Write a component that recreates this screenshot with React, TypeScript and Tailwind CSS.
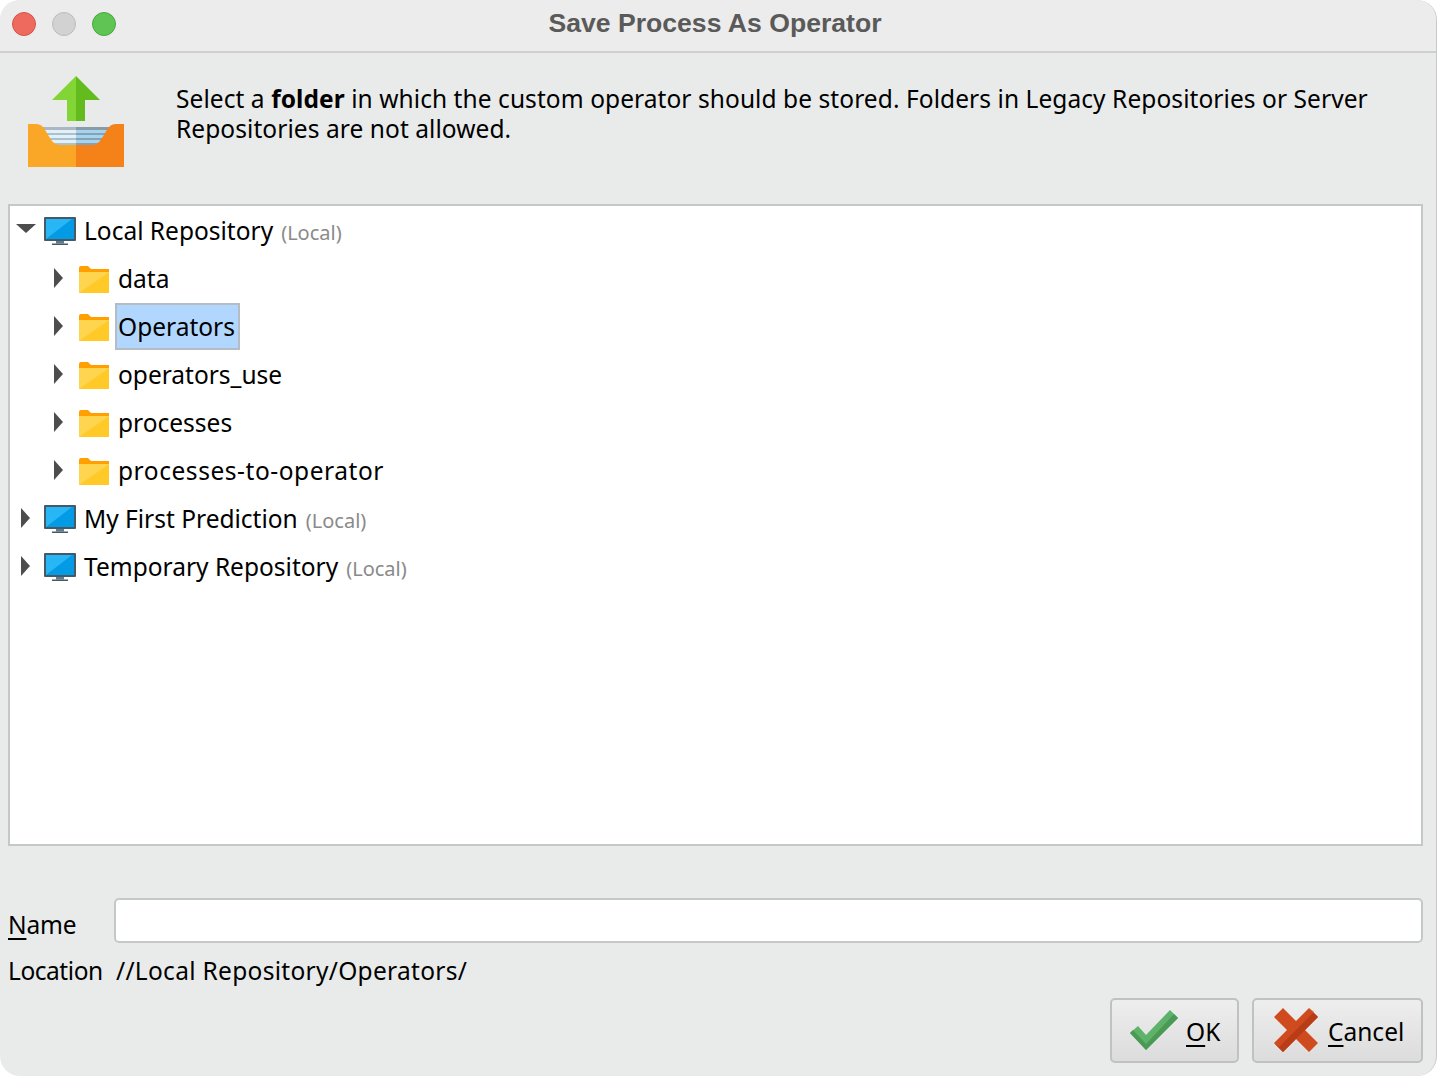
const font = "font-['Noto_Sans',sans-serif]";

function Monitor() {
  return (
    <svg width="32" height="28" viewBox="0 0 32 28" className="shrink-0">
      <rect x="0" y="0" width="32" height="24" rx="1" fill="#455a64" />
      <rect x="2" y="2" width="28" height="20" fill="#039be5" />
      <path d="M2 2H28L2 22Z" fill="#29b6f6" />
      <rect x="12" y="24" width="8" height="2.5" fill="#607d8b" />
      <rect x="8" y="26.5" width="16" height="1.5" fill="#455a64" />
    </svg>
  );
}

function Folder() {
  return (
    <svg width="30" height="27" viewBox="0 0 30 27" className="shrink-0">
      <path d="M0 2Q0 0 2 0H9L12 3H30V27H0Z" fill="#ffa000" />
      <rect x="0" y="6" width="30" height="21" fill="#ffca28" />
      <path d="M0 6H30L0 27Z" fill="#ffd54f" />
    </svg>
  );
}

function ArrowRight() {
  return (
    <svg width="12" height="24" viewBox="0 0 12 24" className="shrink-0 blur-[0.6px] -translate-y-px">
      <path d="M1 2L10 12L1 22Z" fill="#4d4d4d" />
    </svg>
  );
}

function ArrowDown() {
  return (
    <svg width="20" height="11" viewBox="0 0 20 11" className="shrink-0 blur-[0.6px] -translate-y-[3px]">
      <path d="M0 1H20L10 10Z" fill="#4d4d4d" />
    </svg>
  );
}

function UploadIcon() {
  return (
    <svg width="96" height="91" viewBox="0 0 96 91" className="shrink-0">
      <path d="M48 0L24 24H39V45H48Z" fill="#82d534" />
      <path d="M48 0L72 24H57V45H48Z" fill="#64bb1e" />
      <rect x="14" y="51" width="34" height="20" fill="#e3f0f7" />
      <rect x="48" y="51" width="34" height="20" fill="#a5d5ee" />
      <rect x="14" y="51" width="34" height="3" fill="#a9b8c2" />
      <rect x="14" y="57" width="34" height="2" fill="#a9c2d0" />
      <rect x="14" y="62" width="34" height="2" fill="#a9c2d0" />
      <rect x="14" y="67" width="34" height="2" fill="#a9c2d0" />
      <rect x="48" y="51" width="34" height="3" fill="#8a9aa6" />
      <rect x="48" y="57" width="34" height="2" fill="#86a3b5" />
      <rect x="48" y="62" width="34" height="2" fill="#86a3b5" />
      <rect x="48" y="67" width="34" height="2" fill="#86a3b5" />
      <path d="M0 48H8C14 48 16 52 19 57C22 62 25 69 32 69H48V91H0Z" fill="#faa627" />
      <path d="M96 48H88C82 48 80 52 77 57C74 62 71 69 64 69H48V91H96Z" fill="#f58219" />
    </svg>
  );
}

function CheckIcon() {
  return (
    <svg width="48" height="40" viewBox="0 0 48 40" className="shrink-0">
      <path d="M0 23L8 16L16 25L40 0L48 8L16 40Z" fill="#5fb26a" />
      <path d="M16 34L44 4L48 8L16 40L0 23L3 20Z" fill="#4a9a55" />
    </svg>
  );
}

function CrossIcon() {
  return (
    <svg width="44" height="44" viewBox="0 0 44 44" className="shrink-0">
      <path d="M9 0L22 13L35 0L44 9L31 22L44 35L35 44L22 31L9 44L0 35L13 22L0 9Z" fill="#d04a1f" />
      <path d="M35 0L44 9L9 44L0 35L5 39L40 4Z" fill="#b83c16" />
    </svg>
  );
}

function RepoRow({ name, open }: { name: string; open?: boolean }) {
  return (
    <div className="flex items-center h-12">
      <div className="w-[34px] pl-[6px] flex justify-start items-center shrink-0">
        {open ? <ArrowDown /> : <span className="ml-[4px] flex"><ArrowRight /></span>}
      </div>
      <Monitor />
      <span className="ml-2 text-[24.5px] text-black">{name}</span>
      <span className="ml-2 mt-[3px] text-[20px] text-[#8a8a8a]">(Local)</span>
    </div>
  );
}

function FolderRow({ name, selected, wide }: { name: string; selected?: boolean; wide?: boolean }) {
  return (
    <div className="flex items-center h-12 pl-[43px]">
      <div className="w-[26px] shrink-0 flex">
        <ArrowRight />
      </div>
      <Folder />
      <span
        className={`ml-[6px] h-[47px] -translate-y-px pt-[2px] flex items-center pl-px pr-[3px] text-[24.5px] text-black border-2 ${
          selected ? "bg-[#b2d7ff] border-[#b5bcc4]" : "border-transparent"
        } ${wide ? "tracking-[0.55px]" : ""}`}
      >
        {name}
      </span>
    </div>
  );
}

export default function App() {
  return (
    <div className={`w-[1440px] h-[1076px] bg-white overflow-hidden ${font}`}>
      <div className="w-[1437px] h-full bg-[#e9ebeb] rounded-[20px] border-r border-[#c9c9c9] flex flex-col">
        <div className="h-[53px] shrink-0 bg-[#ececec] rounded-t-[20px] border-b-2 border-[#cfcfcf] flex items-center relative">
          <div className="flex gap-[16px] pl-3 -mt-[3px]">
            <div className="w-6 h-6 rounded-full bg-[#ee6a5f] border border-[#d5544a]" />
            <div className="w-6 h-6 rounded-full bg-[#d2d2d2] border border-[#bcbcbc]" />
            <div className="w-6 h-6 rounded-full bg-[#5fc454] border border-[#4aa93f]" />
          </div>
          <div className="absolute inset-x-0 top-[4px] pr-[6px] text-center font-['Liberation_Sans',sans-serif] font-bold text-[26.6px] text-[#5a5a5a]">
            Save Process As Operator
          </div>
        </div>

        <div className="h-[151px] shrink-0 flex pl-7 pr-[60px] pt-[23px]">
          <UploadIcon />
          <p className="ml-[52px] text-[24.5px] tracking-[0.07px] leading-[30px] pt-[8px] text-black">
            Select a <b>folder</b> in which the custom operator should be stored. Folders in Legacy Repositories or Server Repositories are not allowed.
          </p>
        </div>

        <div className="ml-2 mr-[13px] h-[642px] shrink-0 pt-px bg-white border-2 border-[#c6c8c8]">
          <RepoRow name="Local Repository" open />
          <FolderRow name="data" />
          <FolderRow name="Operators" selected />
          <FolderRow name="operators_use" />
          <FolderRow name="processes" />
          <FolderRow name="processes-to-operator" wide />
          <RepoRow name="My First Prediction" />
          <RepoRow name="Temporary Repository" />
        </div>

        <div className="mt-[51px] pl-2 pr-[13px] flex items-center">
          <span className="w-[106px] text-[24.5px] tracking-[-0.2px] text-black pt-[10px]">
            <span className="underline underline-offset-4">N</span>ame
          </span>
          <div className="flex-1 h-[45px] bg-white border-2 border-[#c6c8c8] rounded-[5px]" />
        </div>

        <div className="mt-[9px] pl-2 flex text-[24.5px] text-black">
          <span className="w-[108px] tracking-[-0.45px]">Location</span>
          <span className="tracking-[0.3px]">//Local Repository/Operators/</span>
        </div>

        <div className="mt-[8px] pr-[13px] flex justify-end gap-[13px]">
          <button className="w-[129px] h-[65px] flex items-center pl-[18px] gap-2 rounded-[5px] border-2 border-[#c0c2c2] bg-gradient-to-b from-[#eeeeee] to-[#dcdcdc] text-[24.5px] text-black">
            <CheckIcon />
            <span className="pt-[4px]"><span className="underline underline-offset-4">O</span>K</span>
          </button>
          <button className="w-[171px] h-[65px] flex items-center pl-[20px] gap-[10px] rounded-[5px] border-2 border-[#c0c2c2] bg-gradient-to-b from-[#eeeeee] to-[#dcdcdc] text-[24.5px] text-black">
            <CrossIcon />
            <span className="pt-[4px]"><span className="underline underline-offset-4">C</span>ancel</span>
          </button>
        </div>
      </div>
    </div>
  );
}
